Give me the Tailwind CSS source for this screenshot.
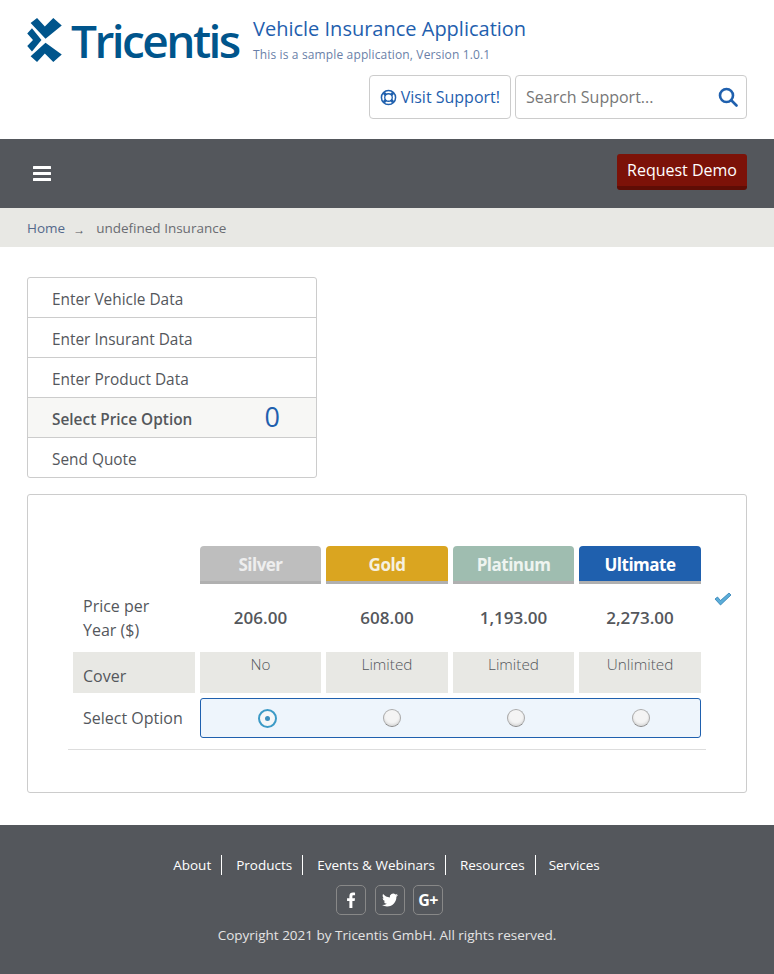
<!DOCTYPE html>
<html lang="en">
<head>
  <meta charset="UTF-8">
  <title>Vehicle Insurance Application</title>
  <script src="https://cdn.jsdelivr.net/npm/@tailwindcss/browser@4"></script>
</head>
<body class="bg-white text-[#54575c] font-['Open_Sans',sans-serif]">
  <header class="h-[139px] px-[27px] pt-[15px]">
    <div class="flex items-start">
      <div class="flex items-center w-[226px] h-[50px]">
        <svg width="35" height="44" viewBox="78 55 102 130" class="shrink-0" fill="#00558c">
          <path d="M107 55 L130 80 L155 55 L180 77 L132 116 L88 70 Z"/>
          <path d="M92 85 L120 120 L92 154 L78 138 L95 120 L78 101 Z"/>
          <path d="M132 128 L180 163 L155 185 L130 160 L107 185 L88 168 Z"/>
        </svg>
        <span class="text-[46px] leading-none font-semibold text-[#00558c] tracking-[-2.55px] ml-[9px]">Tricentis</span>
      </div>
      <div>
        <div class="text-[20px] leading-[28px] text-[#1f60ae]">Vehicle Insurance Application</div>
        <div class="text-[12px] leading-[18px] mt-[3px] tracking-[0.14px] text-[#6a7fa8]">This is a sample application, Version 1.0.1</div>
      </div>
    </div>
    <div class="flex justify-end gap-[4px] mt-[10px]">
      <a class="flex items-center gap-[4px] h-[44px] px-[10px] border border-[#ccc] rounded-[4px] text-[16px] text-[#1f60ae]">
        <svg width="17" height="17" viewBox="0 0 18 18" fill="none" stroke="#1f60ae">
          <circle cx="9" cy="9" r="7.5" stroke-width="1.6"/>
          <circle cx="9" cy="9" r="4" stroke-width="1.4"/>
          <path d="M4 4 L6.5 6.5 M14 4 L11.5 6.5 M4 14 L6.5 11.5 M14 14 L11.5 11.5" stroke-width="3"/>
        </svg>
        Visit Support!
      </a>
      <div class="flex items-center justify-between w-[232px] h-[44px] pl-[10px] pr-[8px] border border-[#ccc] rounded-[4px]">
        <span class="text-[16px] text-[#777]">Search Support...</span>
        <svg width="20" height="20" viewBox="0 0 20 20" fill="none" stroke="#1f60ae" stroke-width="2.6">
          <circle cx="8.5" cy="8.5" r="6.5"/>
          <path d="M13.5 13.5 L18.5 18.5" stroke-linecap="round"/>
        </svg>
      </div>
    </div>
  </header>

  <nav class="h-[69px] bg-[#54575c] flex items-center justify-between pl-[33px] pr-[27px]">
    <svg width="18" height="15" viewBox="0 0 18 15" fill="#fff"><rect y="0" width="18" height="3" rx="0.5"/><rect y="6" width="18" height="3" rx="0.5"/><rect y="12" width="18" height="3" rx="0.5"/></svg>
    <a class="flex items-center justify-center w-[130px] h-[36px] mb-[4px] rounded-[3px] bg-[#7c1208] border-b-[4px] border-[#5e0d05] text-[16px] text-white">Request Demo</a>
  </nav>

  <div class="h-[39px] pt-[1px] bg-[#e8e8e4] flex items-center px-[27px] text-[13.5px]">
    <span class="text-[#54698c]">Home</span>
    <span class="ml-[8px] mr-[11px] text-[12px] mt-[3px]">&rarr;</span>
    <span class="text-[#6a6c72]">undefined Insurance</span>
  </div>

  <main class="px-[27px] pt-[30px]">
    <ul class="w-[290px] border border-[#ccc] rounded-[3px] text-[15.4px]">
      <li class="h-[40px] pt-[4px] flex items-center pl-[24px] border-b border-[#ccc]">Enter Vehicle Data</li>
      <li class="h-[40px] pt-[4px] flex items-center pl-[24px] border-b border-[#ccc]">Enter Insurant Data</li>
      <li class="h-[40px] pt-[4px] flex items-center pl-[24px] border-b border-[#ccc]">Enter Product Data</li>
      <li class="h-[40px] flex items-center justify-between pl-[24px] pr-[36px] border-b border-[#ccc] bg-[#f7f7f5] font-semibold">
        <span class="pt-[4px]">Select Price Option</span>
        <span class="text-[27px] font-medium text-[#1f60ae]">0</span>
      </li>
      <li class="h-[39px] pt-[4px] flex items-center pl-[24px]">Send Quote</li>
    </ul>

    <section class="relative mt-[16px] h-[299px] border border-[#ccc] rounded-[3px] px-[40px] pt-[51px]">
      <svg class="absolute left-[686px] top-[97px]" width="18" height="14" viewBox="0 0 18 14" fill="#5badd8" stroke="#2f7fb5" stroke-width="0.8">
        <path d="M1 7 L3.5 5 L6.5 8.5 L15 1 L17 3 L6.5 13 Z"/>
      </svg>

      <div class="px-[5px] pb-[11px] border-b border-[#ddd]">
        <div class="grid grid-cols-[122px_121px_122px_121px_122px] gap-x-[5px]">
          <div></div>
          <div class="h-[38px] pt-[2px] rounded-t-[4px] bg-[#bebebe] border-b-[3px] border-[#b0b0b0] text-[17px] font-bold text-[#eee] flex items-center justify-center tracking-[-0.5px]">Silver</div>
          <div class="h-[38px] pt-[2px] rounded-t-[4px] bg-[#daa520] border-b-[3px] border-[#b0b0b0] text-[17px] font-bold text-[#f5f0e0] flex items-center justify-center tracking-[-0.5px]">Gold</div>
          <div class="h-[38px] pt-[2px] rounded-t-[4px] bg-[#9fbdb0] border-b-[3px] border-[#b0b0b0] text-[17px] font-bold text-[#eef4f0] flex items-center justify-center tracking-[-0.5px]">Platinum</div>
          <div class="h-[38px] pt-[2px] rounded-t-[4px] bg-[#1f60ae] border-b-[3px] border-[#b0b0b0] text-[17px] font-bold text-white flex items-center justify-center tracking-[-0.5px]">Ultimate</div>

          <div class="h-[68px] pl-[10px] pt-[10px] text-[16px] leading-[24px]">Price per<br>Year ($)</div>
          <div class="h-[68px] flex items-center justify-center text-[17px] font-semibold">206.00</div>
          <div class="h-[68px] flex items-center justify-center text-[17px] font-semibold">608.00</div>
          <div class="h-[68px] flex items-center justify-center text-[17px] font-semibold">1,193.00</div>
          <div class="h-[68px] flex items-center justify-center text-[17px] font-semibold">2,273.00</div>

          <div class="h-[41px] bg-[#e8e8e4] pl-[10px] pt-[12px] text-[16px] leading-[24px]">Cover</div>
          <div class="h-[41px] bg-[#e8e8e4] text-center text-[15.3px] font-light leading-[25px]">No</div>
          <div class="h-[41px] bg-[#e8e8e4] text-center text-[15.3px] font-light leading-[25px]">Limited</div>
          <div class="h-[41px] bg-[#e8e8e4] text-center text-[15.3px] font-light leading-[25px]">Limited</div>
          <div class="h-[41px] bg-[#e8e8e4] text-center text-[15.3px] font-light leading-[25px]">Unlimited</div>

          <div class="h-[40px] mt-[5px] pl-[10px] flex items-center text-[16px]">Select Option</div>
          <div class="col-span-4 h-[40px] mt-[5px] grid grid-cols-4 items-center border border-[#1f60ae] rounded-[3px] bg-[#eef5fc]">
            <div class="flex justify-center pl-[8px]">
              <span class="w-[19px] h-[19px] rounded-full border-2 border-[#3c9ac6] bg-[#f5f7f8] flex items-center justify-center"><span class="w-[5px] h-[5px] rounded-full bg-[#3c8fbe]"></span></span>
            </div>
            <div class="flex justify-center pl-[8px]"><span class="w-[18px] h-[18px] rounded-full border border-[#aaa] border-b-[#888] bg-[#f4f4f4] shadow-[inset_0_-2px_2px_#ddd]"></span></div>
            <div class="flex justify-center pl-[7px]"><span class="w-[18px] h-[18px] rounded-full border border-[#aaa] border-b-[#888] bg-[#f4f4f4] shadow-[inset_0_-2px_2px_#ddd]"></span></div>
            <div class="flex justify-center pl-[7px]"><span class="w-[18px] h-[18px] rounded-full border border-[#aaa] border-b-[#888] bg-[#f4f4f4] shadow-[inset_0_-2px_2px_#ddd]"></span></div>
          </div>
        </div>
      </div>
    </section>
  </main>

  <footer class="mt-[32px] h-[149px] bg-[#54575c] pt-[30px] text-white">
    <div class="flex justify-center pr-[1px] text-[13.5px] leading-[20px]">
      <a class="pr-[10px] border-r border-white">About</a>
      <a class="pl-[14px] pr-[10px] border-r border-white">Products</a>
      <a class="pl-[14px] pr-[10px] border-r border-white">Events &amp; Webinars</a>
      <a class="pl-[14px] pr-[10px] border-r border-white">Resources</a>
      <a class="pl-[13px]">Services</a>
    </div>
    <div class="flex justify-center gap-[8px] pl-[5px] mt-[10px]">
      <a class="w-[30px] h-[30px] mr-[1px] flex items-center justify-center rounded-[5px] border border-[#888]">
        <svg width="10" height="16" viewBox="0 0 9 15" fill="#fff"><path d="M3 15 V8.5 H0.8 V5.8 H3 V4 C3 1.5 4.3 0.5 6.3 0.5 C7.2 0.5 8 0.6 8.3 0.6 V3 H6.9 C5.9 3 5.8 3.5 5.8 4.2 V5.8 H8.3 L7.9 8.5 H5.8 V15 Z"/></svg>
      </a>
      <a class="w-[30px] h-[30px] flex items-center justify-center rounded-[5px] border border-[#888]">
        <svg width="16" height="16" viewBox="0 0 24 24" fill="#fff"><path d="M23.953 4.57a10 10 0 01-2.825.775 4.958 4.958 0 002.163-2.723c-.951.555-2.005.959-3.127 1.184a4.92 4.92 0 00-8.384 4.482C7.69 8.095 4.067 6.13 1.64 3.162a4.822 4.822 0 00-.666 2.475c0 1.71.87 3.213 2.188 4.096a4.904 4.904 0 01-2.228-.616v.06a4.923 4.923 0 003.946 4.827 4.996 4.996 0 01-2.212.085 4.936 4.936 0 004.604 3.417 9.867 9.867 0 01-6.102 2.105c-.39 0-.779-.023-1.17-.067a13.995 13.995 0 007.557 2.209c9.053 0 13.998-7.496 13.998-13.985 0-.21 0-.42-.015-.63A9.935 9.935 0 0024 4.59z"/></svg>
      </a>
      <a class="w-[30px] h-[30px] flex items-center justify-center rounded-[5px] border border-[#888] text-[16px] font-bold tracking-[-0.5px]">G+</a>
    </div>
    <div class="text-center text-[13.5px] leading-[20px] mt-[10px] text-[#e4e4e4]">Copyright 2021 by Tricentis GmbH. All rights reserved.</div>
  </footer>
</body>
</html>
